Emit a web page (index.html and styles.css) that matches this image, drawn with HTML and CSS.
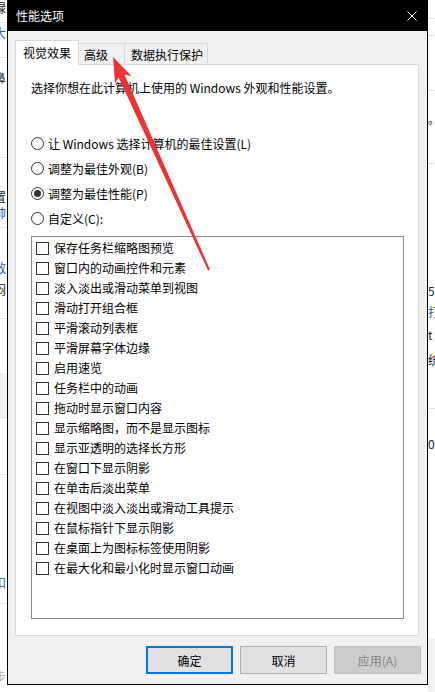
FILE: index.html
```html
<!DOCTYPE html>
<html lang="zh-CN">
<head>
<meta charset="utf-8">
<title>性能选项</title>
<link rel="stylesheet" href="styles.css">
</head>
<body>
<div class="desk">
  <div class="strip strip-left">
    <div class="t">碌</div><div class="g6"></div><div class="ln"></div>
    <div class="g2"></div><div class="t blue">大</div><div class="g16"></div><div class="ln"></div>
    <div class="g12"></div><div class="t">鼻</div><div class="g71"></div><div class="ln"></div>
    <div class="g31"></div><div class="t">置</div><div class="t blue">帅</div><div class="g6"></div><div class="ln"></div>
    <div class="g32"></div><div class="t blue">敌</div><div class="g6"></div><div class="t">闷</div><div class="g20"></div><div class="ln"></div>
    <div class="g54"></div><div class="band b44"></div><div class="ln"></div>
    <div class="g56"></div><div class="ln"></div>
    <div class="g100"></div><div class="t blue">扣</div><div class="g12"></div><div class="ln"></div>
    <div class="g65"></div><div class="t grey">步</div>
  </div>

  <div class="dialog">
    <div class="titlebar">
      <span class="title">性能选项</span>
      <svg class="close" width="10" height="10" viewBox="0 0 10 10"><path d="M0.5 0.5 L9.5 9.5 M9.5 0.5 L0.5 9.5" stroke="#fff" stroke-width="1" fill="none"/></svg>
    </div>
    <div class="dbody">
      <div class="tabs">
        <div class="tab tab-active">视觉效果</div>
        <div class="tab tab-adv">高级</div>
        <div class="tab tab-dep">数据执行保护</div>
      </div>
      <div class="panel">
        <p class="desc">选择你想在此计算机上使用的 Windows 外观和性能设置。</p>
        <div class="radios">
          <div class="radio"><span class="rb"></span>让 Windows 选择计算机的最佳设置(L)</div>
          <div class="radio"><span class="rb"></span>调整为最佳外观(B)</div>
          <div class="radio"><span class="rb rb-on"></span>调整为最佳性能(P)</div>
          <div class="radio"><span class="rb"></span>自定义(C):</div>
        </div>
        <div class="listbox">
          <div class="item"><span class="cb"></span>保存任务栏缩略图预览</div>
          <div class="item"><span class="cb"></span>窗口内的动画控件和元素</div>
          <div class="item"><span class="cb"></span>淡入淡出或滑动菜单到视图</div>
          <div class="item"><span class="cb"></span>滑动打开组合框</div>
          <div class="item"><span class="cb"></span>平滑滚动列表框</div>
          <div class="item"><span class="cb"></span>平滑屏幕字体边缘</div>
          <div class="item"><span class="cb"></span>启用速览</div>
          <div class="item"><span class="cb"></span>任务栏中的动画</div>
          <div class="item"><span class="cb"></span>拖动时显示窗口内容</div>
          <div class="item"><span class="cb"></span>显示缩略图，而不是显示图标</div>
          <div class="item"><span class="cb"></span>显示亚透明的选择长方形</div>
          <div class="item"><span class="cb"></span>在窗口下显示阴影</div>
          <div class="item"><span class="cb"></span>在单击后淡出菜单</div>
          <div class="item"><span class="cb"></span>在视图中淡入淡出或滑动工具提示</div>
          <div class="item"><span class="cb"></span>在鼠标指针下显示阴影</div>
          <div class="item"><span class="cb"></span>在桌面上为图标标签使用阴影</div>
          <div class="item"><span class="cb"></span>在最大化和最小化时显示窗口动画</div>
        </div>
      </div>
      <div class="buttons">
        <button class="btn btn-default">确定</button>
        <button class="btn">取消</button>
        <button class="btn btn-disabled">应用(A)</button>
      </div>
    </div>
  </div>

  <div class="strip strip-right">
    <div class="g18"></div><div class="ln"></div>
    <div class="g16"></div><div class="ln"></div>
    <div class="g54"></div><div class="ln"></div>
    <div class="g20"></div><div class="t">。</div><div class="g36"></div><div class="ln"></div>
    <div class="g119"></div><div class="t">5-</div><div class="g5"></div><div class="t blue">打</div><div class="g7"></div><div class="t">t</div><div class="g9"></div><div class="t">统</div><div class="g40"></div><div class="ln"></div>
    <div class="g27"></div><div class="t">0:</div><div class="g186"></div><div class="band b55"></div>
  </div>
</div>

<svg class="arrow" width="435" height="692" viewBox="0 0 435 692">
  <polygon points="113,57 131.5,76 124.6,74.8 210,269.6 208,270.4 118.6,77.4 115,83.5" fill="#ee3333"/>
</svg>
</body>
</html>
```

FILE: styles.css
```css
* { box-sizing: border-box; }

html, body {
  margin: 0;
  padding: 0;
  background: #ffffff;
}

body {
  width: 435px;
  height: 692px;
  overflow: hidden;
  position: relative;
  font-family: "Noto Sans CJK SC", "Microsoft YaHei", sans-serif;
  font-size: 12px;
  line-height: 16px;
  color: #000;
}

.desk {
  display: grid;
  grid-template-columns: 7px 421px 7px;
  height: 692px;
}

/* background slivers of the window underneath */
.strip {
  display: flex;
  flex-direction: column;
  overflow: hidden;
  height: 692px;
  background: #fff;
  color: #222;
}
.strip .t { height: 16px; white-space: nowrap; flex: none; }
.strip-left .t { margin-left: -6px; }
.strip .blue { color: #2a5aa8; }
.strip .grey { color: #b5b5b5; }
.strip .ln { height: 1px; background: #e3e3e3; flex: none; }
.strip .band { background: #f2f2f2; flex: none; }
.b44 { height: 44px; }
.b55 { height: 55px; }
.g2 { height: 2px; flex: none; }
.g5 { height: 5px; flex: none; }
.g6 { height: 6px; flex: none; }
.g7 { height: 7px; flex: none; }
.g9 { height: 9px; flex: none; }
.g12 { height: 12px; flex: none; }
.g16 { height: 16px; flex: none; }
.g18 { height: 18px; flex: none; }
.g20 { height: 20px; flex: none; }
.g27 { height: 27px; flex: none; }
.g31 { height: 31px; flex: none; }
.g32 { height: 32px; flex: none; }
.g36 { height: 36px; flex: none; }
.g40 { height: 40px; flex: none; }
.g54 { height: 54px; flex: none; }
.g56 { height: 56px; flex: none; }
.g65 { height: 65px; flex: none; }
.g71 { height: 71px; flex: none; }
.g100 { height: 100px; flex: none; }
.g119 { height: 119px; flex: none; }
.g186 { height: 186px; flex: none; }

/* dialog */
.dialog {
  height: 685px;
  background: #f0f0f0;
  border: 1px solid #000;
  border-top: 0;
  display: flex;
  flex-direction: column;
}

.titlebar {
  height: 31px;
  background: #000;
  margin: 0 -1px;
  padding: 0 11px 0 9px;
  display: flex;
  align-items: center;
  justify-content: space-between;
  flex: none;
}
.title { color: #fff; }
.close { display: block; }

.dbody {
  padding: 9px 6px 0 7px;
  display: flex;
  flex-direction: column;
}

.tabs {
  display: flex;
  align-items: flex-end;
  height: 25px;
}
.tab {
  background: #f0f0f0;
  border: 1px solid #d9d9d9;
  border-bottom: 0;
  height: 22px;
  display: flex;
  align-items: center;
  white-space: nowrap;
}
.tab-active {
  position: relative;
  z-index: 1;
  background: #fff;
  height: 25px;
  width: 64px;
  padding-left: 7px;
}
.tab-adv {
  width: 47px;
  margin-left: -1px;
  padding-left: 5px;
}
.tab-dep {
  width: 84px;
  margin-left: -1px;
  padding-left: 6px;
}

.panel {
  margin-top: -1px;
  width: 404px;
  height: 572px;
  background: #fff;
  border: 1px solid #d9d9d9;
  padding: 0 0 0 15px;
}

.desc {
  margin: 15px 0 0 0;
  white-space: nowrap;
}

.radios {
  margin-top: 35px;
  display: flex;
  flex-direction: column;
}
.radio {
  height: 25px;
  display: flex;
  align-items: center;
  white-space: nowrap;
}
.rb {
  width: 13px;
  height: 13px;
  border: 1px solid #333;
  border-radius: 50%;
  background: #fff;
  margin-right: 4px;
  flex: none;
  display: flex;
  align-items: center;
  justify-content: center;
}
.rb-on::after {
  content: "";
  width: 7px;
  height: 7px;
  border-radius: 50%;
  background: #333;
}

.listbox {
  margin-top: 5px;
  width: 373px;
  height: 383px;
  border: 1px solid #828790;
  padding: 1px 0 0 4px;
  display: flex;
  flex-direction: column;
}
.item {
  height: 20px;
  display: flex;
  align-items: center;
  white-space: nowrap;
}
.cb {
  width: 13px;
  height: 13px;
  border: 1px solid #333;
  background: #fff;
  margin-right: 5px;
  flex: none;
}

.buttons {
  margin-top: 10px;
  display: flex;
  justify-content: flex-end;
  gap: 7px;
}
.btn {
  width: 87px;
  height: 28px;
  font-family: inherit;
  font-size: 12px;
  color: #000;
  background: #e1e1e1;
  border: 1px solid #adadad;
  padding: 0;
  margin: 0;
}
.btn-default {
  border: 2px solid #0078d7;
}
.btn-disabled {
  background: #cccccc;
  border-color: #bfbfbf;
  color: #838383;
}

.arrow {
  position: absolute;
  left: 0;
  top: 0;
  pointer-events: none;
}
```
